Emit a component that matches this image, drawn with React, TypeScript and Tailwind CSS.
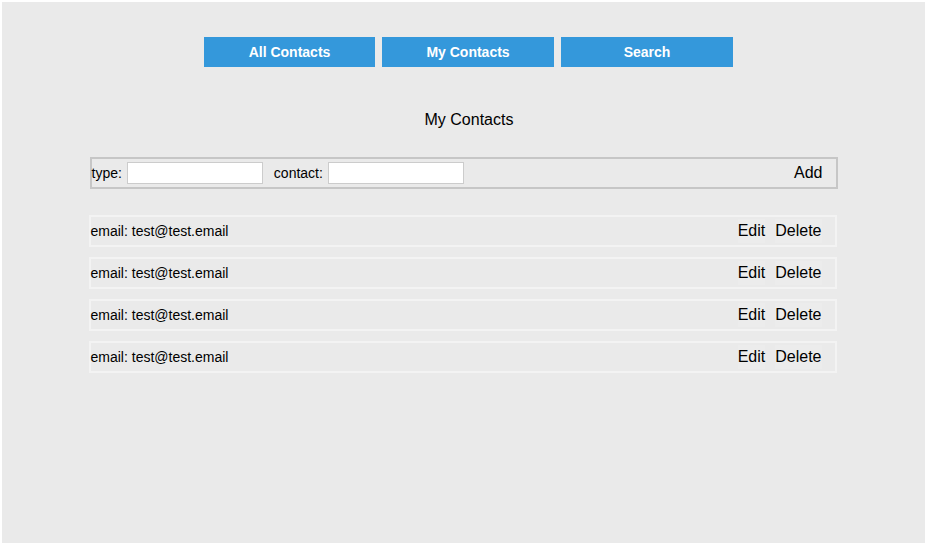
import React from 'react';

const contacts = [
    { type: 'email', value: 'test@test.email' },
    { type: 'email', value: 'test@test.email' },
    { type: 'email', value: 'test@test.email' },
    { type: 'email', value: 'test@test.email' },
];

export default function App() {
    return (
        <div className="bg-white p-[2px] w-[927px] h-[545px]" style={{ fontFamily: '"Liberation Sans", Arial, sans-serif' }}>
            <div className="bg-[#eaeaea] h-full pt-[35px] text-black">
                {/* Nav */}
                <nav className="flex justify-center gap-[7px] pl-[10px]">
                    <button className="w-[171px] h-[30px] bg-[#3498db] text-white text-[14px] font-bold">All Contacts</button>
                    <button className="w-[172px] h-[30px] bg-[#3498db] text-white text-[14px] font-bold">My Contacts</button>
                    <button className="w-[172px] h-[30px] bg-[#3498db] text-white text-[14px] font-bold">Search</button>
                </nav>

                <h2 className="text-center text-[16px] leading-[18px] mt-[44px] pl-[11px]">My Contacts</h2>

                {/* Add form */}
                <form className="mx-auto mt-[28px] w-[748px] h-[32px] border-2 border-[#c6c6c6] flex items-center pr-[13px] text-[14px]">
                    <label>type: </label>
                    <input className="ml-[5px] w-[136px] h-[22px] bg-white border border-[#cccccc]" />
                    <label className="ml-[11px]">contact: </label>
                    <input className="ml-[5px] w-[136px] h-[22px] bg-white border border-[#cccccc]" />
                    <button type="button" className="ml-auto text-[16px]">Add</button>
                </form>

                {/* Contact list */}
                <ul className="mt-[26px] flex flex-col gap-[10px]">
                    {contacts.map((c, i) => (
                        <li key={i} className="mx-auto w-[748px] h-[32px] border-2 border-[#f3f3f3] flex items-center pr-[13px] -translate-x-px">
                            <span className="text-[14px]">{c.type}: {c.value}</span>
                            <div className="ml-auto flex gap-[10px] text-[16px]">
                                <button className="bg-[#ececec]">Edit</button>
                                <button className="bg-[#ececec]">Delete</button>
                            </div>
                        </li>
                    ))}
                </ul>
            </div>
        </div>
    );
}
